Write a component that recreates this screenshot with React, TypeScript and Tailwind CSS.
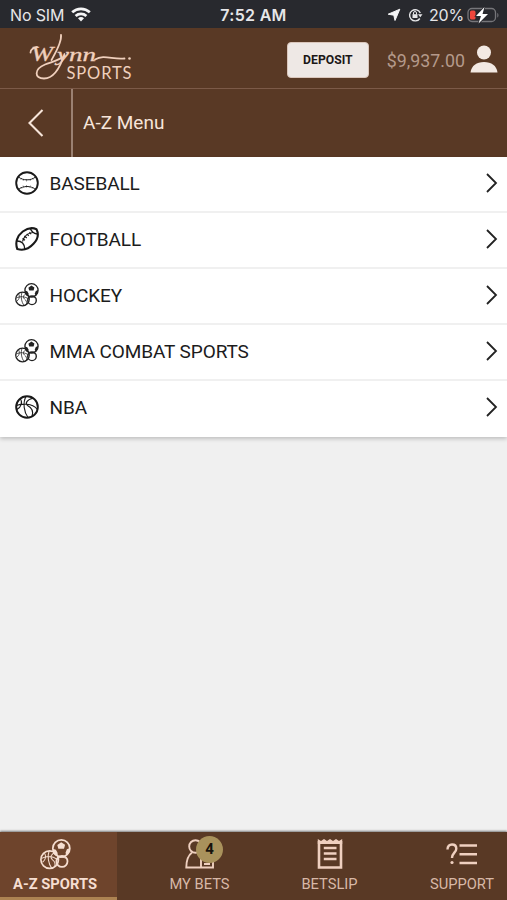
import clsx from 'clsx';
import type { ReactNode } from 'react';

function WifiIcon() {
  return (
    <svg width="20" height="15" viewBox="0 0 20 15" fill="none" stroke="#f5f5f6" strokeWidth="2.7">
      <path d="M1.2 5.3C6.2.6 13.8.6 18.8 5.3" />
      <path d="M4.6 9C7.7 6.2 12.3 6.2 15.4 9" />
      <path d="M7 11.2c1.8-1.6 4.2-1.6 6 0l-3 3.2z" fill="#f5f5f6" stroke="none" />
    </svg>
  );
}

function BatteryIcon() {
  return (
    <svg width="33" height="18" viewBox="0 0 33 18">
      <rect x="1" y="2.5" width="27.5" height="13" rx="4" fill="none" stroke="#76767a" strokeWidth="1.3" />
      <path d="M30.3 7v4.5c1.5-.5 1.5-4 0-4.5z" fill="#76767a" />
      <rect x="3" y="4.5" width="5.5" height="9" rx="1.5" fill="#f0463c" />
      <path
        d="M17.5 1 9 10h5l-2.5 7.5L21 8h-5.5z"
        fill="#fff"
        stroke="#28292e"
        strokeWidth="1.5"
        paintOrder="stroke"
      />
    </svg>
  );
}

function StatusBar() {
  return (
    <div className="relative flex h-7 shrink-0 items-center justify-between bg-[#28292e] pt-px pr-[7px] pl-[10px] font-['Inter',sans-serif] text-[#e6e6e8]">
      <div className="flex items-center gap-[7px]">
        <span className="text-[16px] tracking-[-0.15px]">No SIM</span>
        <WifiIcon />
      </div>
      <span className="absolute inset-x-0 text-center text-[16px] font-semibold tracking-[0.3px]">7:52 AM</span>
      <div className="flex items-center">
        <svg className="mr-[7px]" width="14" height="14" viewBox="0 0 14 14">
          <path d="M12.8 1.2 8 12.5 6.8 7.2 1.2 6.2z" fill="#f5f5f6" stroke="#f5f5f6" strokeLinejoin="round" />
        </svg>
        <svg className="mr-[6px]" width="15" height="14" viewBox="0 0 15 14" fill="none" stroke="#e6e6e8">
          <path d="M11.8 10.5A5.6 5.6 0 1 1 12.3 5" strokeWidth="1.4" />
          <path d="m10 6.2 2.3 3 2.2-3z" fill="#e6e6e8" stroke="none" />
          <rect x="4.5" y="6.2" width="5" height="3.8" fill="#e6e6e8" stroke="none" />
          <path d="M5.5 6.5V5a1.5 1.5 0 0 1 3 0v1.5" />
        </svg>
        <span className="mr-[3px] text-[16px] tracking-[-0.2px]">20%</span>
        <BatteryIcon />
      </div>
    </div>
  );
}

function Logo() {
  return (
    <svg className="-mt-px" width="108" height="52" viewBox="0 0 108 52" fill="none">
      <g stroke="#f0d0bd" strokeLinecap="round" strokeWidth="1.8">
        <path d="M24.5 28C29 20 35 10 34 3" />
        <path d="M3.5 20.5C3.5 17.5 7 15.5 10 15" />
        <path d="M37.5 22C34 33 28 46.5 17 46.5 7 46.5 7 37 18 32.5 26 29.5 32 28 38 24" />
        <path d="M68 27.5C77 22 86 28 97.5 26.5" />
      </g>
      <circle cx="102.5" cy="26.5" r="1.3" fill="#f0d0bd" />
      <g
        fill="#f0d0bd"
        stroke="#f0d0bd"
        strokeWidth=".3"
        className="font-['Liberation_Serif',serif] italic"
      >
        <text x="4" y="28.5" textLength="22" lengthAdjust="spacingAndGlyphs" className="text-[21px]">
          W
        </text>
        <text x="30" y="28.5" textLength="39" lengthAdjust="spacingAndGlyphs" className="text-[18px]">
          ynn
        </text>
      </g>
      <text x="39.5" y="47" textLength="65" fill="#f0d0bd" className="font-['Lato',sans-serif] text-[16.5px]">
        SPORTS
      </text>
    </svg>
  );
}

function Header() {
  return (
    <header className="flex h-[61px] shrink-0 items-center border-b border-[#7c5a48] bg-[#593925] pr-[9px] pl-[27px]">
      <Logo />
      <button className="mt-[3px] ml-auto h-[36px] w-[82px] rounded-[4px] border border-[#dac6bb] bg-[#eee8e5] pt-[2px] text-[12.2px] font-bold text-[#1b1717]">
        DEPOSIT
      </button>
      <span className="mt-[6px] ml-[18px] text-[17.8px] text-[#b4998b]">$9,937.00</span>
      <svg className="mt-[2px] ml-[5px]" width="28" height="28" viewBox="0 0 28 28" fill="#f3e9e3">
        <circle cx="14" cy="7.5" r="7" />
        <path d="M.5 27.5C1.5 20.5 6.5 17 14 17s12.5 3.5 13.5 10.5z" />
      </svg>
    </header>
  );
}

function BaseballIcon() {
  return (
    <svg width="24" height="24" viewBox="0 0 24 24" fill="none" stroke="#191919">
      <circle cx="12" cy="12" r="10.8" strokeWidth="1.9" />
      <path d="M3.5 6C8 9.8 16 9.8 20.5 6M3.5 18.5c4.5-4 12.5-4 17 0" />
      <path
        d="M5.5 8.5 7 7m1 3 1-2m2.5 2.5V8m4 2-1-2m4 .5L17 7M5.5 16 7 17.5m1-3 1 2m2.5-2.5v2.5m4-2-1 2m4-.5L17 17.5"
        strokeWidth=".7"
        opacity=".6"
      />
    </svg>
  );
}

function FootballIcon() {
  return (
    <svg width="24" height="24" viewBox="0 0 24 24" fill="none" stroke="#191919">
      <path
        d="M2.3 22C-.2 15.5 2.3 8.7 7.8 4.5 12.5 1 18 .6 21.5 2.2c2.5 5 .8 10.6-3 14.6-4.5 5-10.8 6.8-16.2 5.2z"
        strokeWidth="2.1"
        strokeLinejoin="round"
      />
      <path d="M1.8 14c4.7-.2 8 3 8 8.3M15.5 1.8c1 2.8 3.2 4.7 6.5 5.2" strokeWidth="1.4" />
      <path d="M7.5 14.5C9 9.5 13 6 18 5.5" strokeWidth="1.1" />
      <path d="m7.5 11.5 2.5 1.8M9.3 9l2.5 2M11.8 6.8l2 2.2M14.5 5l1.5 2.3" strokeWidth="1.1" />
    </svg>
  );
}

function BasketballIcon() {
  return (
    <svg width="24" height="24" viewBox="0 0 24 24" fill="none" stroke="#191919">
      <circle cx="12" cy="12" r="10.8" strokeWidth="2" />
      <path
        d="M1.5 10.5C7 8.5 17 8 22 14M11 1.5C7.5 8 9 17 13 22.5M5 3.5C8 7 6.5 12 1.8 14.5M18 3.2C11.5 4.5 10 8.5 12.5 10.5c4 2 6.5 5 4.5 11"
        strokeWidth="1.1"
      />
    </svg>
  );
}

function BallsIcon({ className }: { className?: string }) {
  return (
    <svg className={clsx('fill-none stroke-current', className)} viewBox="0 0 24 24">
      <circle cx="16.5" cy="7.3" r="6.6" strokeWidth="1.3" />
      <g fill="currentColor" stroke="none">
        <path d="m13.4 4.7 3-2.2 3 1.9-.8 3.2h-4.4z" />
        <path d="m9.8 7.5 2.5.8 1.5 2.7-1.5 2c-1.5-1-2.6-3-2.5-5.5zM23.1 7l-2.3 1-1.1 2.8 1.1 2c1.5-1.3 2.4-3.3 2.3-5.8z" />
      </g>
      <circle cx="7.5" cy="16" r="6.8" strokeWidth="1.3" />
      <path
        d="M1.2 15c4-2 9-1.5 12.6 1M7 9.5c-1.5 4-.5 9.5 2 13M3.5 11c1.5 2 1 5-1.5 7M11.5 10.5c-3 1.5-4 3.5-2 5.5 1.5 1 2.5 3 2 5"
        strokeWidth=".8"
      />
      <circle cx="17" cy="17.3" r="4.3" strokeWidth="1.4" />
      <path d="M14 14.8c1.7-.8 4.3-.8 6 0" strokeWidth=".7" />
    </svg>
  );
}

const sports: { name: string; icon: ReactNode }[] = [
  { name: 'BASEBALL', icon: <BaseballIcon /> },
  { name: 'FOOTBALL', icon: <FootballIcon /> },
  { name: 'HOCKEY', icon: <BallsIcon className="size-6 text-[#222]" /> },
  { name: 'MMA COMBAT SPORTS', icon: <BallsIcon className="size-6 text-[#222]" /> },
  { name: 'NBA', icon: <BasketballIcon /> },
];

function SportsList() {
  return (
    <ul className="shrink-0 bg-white shadow-[0_2px_4px_rgba(0,0,0,0.2)]">
      {sports.map((sport) => (
        <li
          key={sport.name}
          className="flex h-14 items-center border-b-2 border-[#f0f0f0] pr-[9px] pb-[2px] pl-[15px] last:border-white"
        >
          {sport.icon}
          <span className="mt-[3px] ml-[10.5px] text-[19px] tracking-[-0.1px] text-[#1c1c1c]">{sport.name}</span>
          <svg className="-mt-px ml-auto" width="13" height="20" viewBox="0 0 13 20" fill="none" stroke="#222">
            <path d="M2 1 11 10 2 19" strokeWidth="1.8" />
          </svg>
        </li>
      ))}
    </ul>
  );
}

function MyBetsIcon() {
  return (
    <div className="relative h-[31px] w-[30px]">
      <svg width="30" height="31" viewBox="0 0 30 31" fill="none" stroke="#efd0c0" strokeWidth="1.9">
        <circle cx="10.5" cy="7.5" r="6.3" />
        <path d="M7 13.5C3 16.5 1.3 21 1.3 28.5H28V17" />
        <path d="M16 14v14.5M19 25h6" />
      </svg>
      <span className="absolute -top-[3px] left-[11.5px] flex size-[27px] items-center justify-center rounded-full bg-[#a9925c] text-[15px] font-bold text-[#17120b]">
        4
      </span>
    </div>
  );
}

function BetslipIcon() {
  return (
    <svg width="26" height="32" viewBox="0 0 26 32" fill="none" stroke="#efd0c0">
      <path d="M2 3v26.5h22V3" strokeWidth="2.6" />
      <path d="M.8 1 4 3l3-2 3 2 3-2 3 2 3-2 3 2 3.2-2v5H.8z" fill="#efd0c0" stroke="none" />
      <path d="M6.8 10h12.7M6.8 15.5h12.7M6.8 21h12.7" strokeWidth="2.3" />
    </svg>
  );
}

function SupportIcon() {
  return (
    <svg width="32" height="22" viewBox="0 0 32 22" fill="none" stroke="#efd0c0" strokeWidth="2.4">
      <path d="M1.5 6.5C1.5 3 3.5 1.5 6 1.5s4.3 1.6 4.3 4.2C10.3 9.5 6 10 6 15" />
      <circle cx="6" cy="19.5" r="1.6" fill="#efd0c0" stroke="none" />
      <path d="M13.5 2.5H31M13.5 11.3H31M13.5 20H31" />
    </svg>
  );
}

type NavItemProps = {
  label: string;
  className: string;
  active?: boolean;
  children: ReactNode;
};

function NavItem({ label, className, active, children }: NavItemProps) {
  return (
    <button
      className={clsx(
        'flex shrink-0 flex-col items-center pt-[5px] text-[14.7px] whitespace-nowrap',
        active ? 'border-b-[3px] border-[#ad8352] bg-[#6e442c] font-bold text-[#f6ded1]' : 'text-[#d8b8a7]',
        className
      )}
    >
      <span className="flex h-[34px] items-center">{children}</span>
      <span className="mt-[3px] leading-5">{label}</span>
    </button>
  );
}

export default function App() {
  return (
    <div className="flex h-[900px] w-[507px] flex-col overflow-hidden bg-[#f0f0f0] font-['Roboto',sans-serif]">
      <StatusBar />
      <Header />
      <div className="flex h-[68px] shrink-0 items-center bg-[#593925] text-[#f7e5da]">
        <button className="flex h-full w-[73px] items-center justify-center border-r-2 border-[#9b8172]">
          <svg width="16" height="28" viewBox="0 0 16 28" fill="none" stroke="currentColor">
            <path d="M14.5 1 1.5 14l13 13" strokeWidth="2.1" />
          </svg>
        </button>
        <h1 className="ml-[10px] text-[19px]">A-Z Menu</h1>
      </div>
      <main className="flex-1">
        <SportsList />
      </main>
      <nav className="flex h-[68px] shrink-0 bg-[#593925] shadow-[0_-1px_2px_rgba(0,0,0,0.5)]">
        <NavItem label="A-Z SPORTS" className="w-[117px] pr-[7px]" active>
          <BallsIcon className="size-[31px]" />
        </NavItem>
        <NavItem label="MY BETS" className="w-[165px]">
          <MyBetsIcon />
        </NavItem>
        <NavItem label="BETSLIP" className="w-[95px]">
          <BetslipIcon />
        </NavItem>
        <NavItem label="SUPPORT" className="ml-[20px] w-[130px]">
          <SupportIcon />
        </NavItem>
      </nav>
    </div>
  );
}
